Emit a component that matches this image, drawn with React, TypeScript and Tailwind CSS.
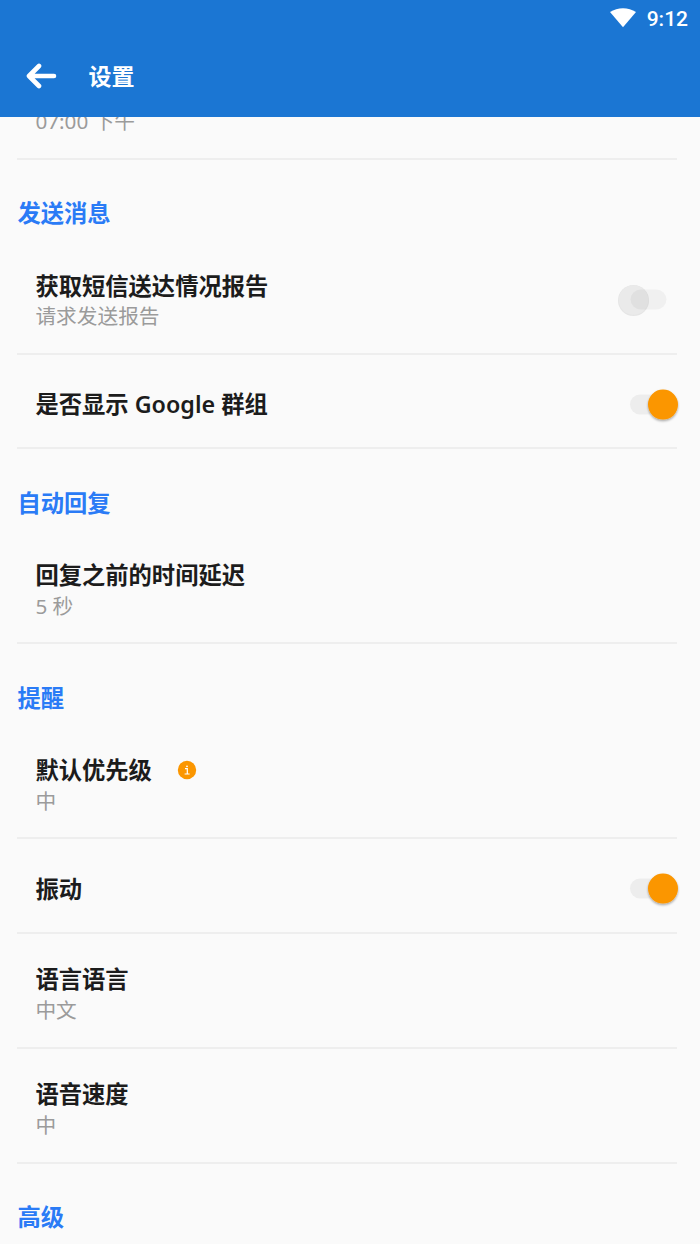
import React from "react";

const FONT = "font-['Noto_Sans','Noto_Sans_CJK_SC',sans-serif]";

function Toggle({ on }: { on: boolean }) {
  return on ? (
    <svg className="-mr-1 h-[40px] w-[56px]" viewBox="0 0 56 40">
      <defs>
        <filter id="knob" x="-30%" y="-30%" width="160%" height="160%">
          <feDropShadow dx="0" dy="1.5" stdDeviation="1" floodColor="#000" floodOpacity="0.35" />
        </filter>
      </defs>
      <rect x="5" y="9.5" width="36" height="20" rx="10" fill="#ededed" />
      <circle cx="38" cy="19.6" r="15" fill="#fb9600" filter="url(#knob)" />
    </svg>
  ) : (
    <svg className="-mr-1 h-[40px] w-[68px]" viewBox="0 0 68 40">
      <circle cx="20.5" cy="20.5" r="15.5" fill="#e5e5e5" />
      <circle cx="20.5" cy="20" r="14.7" fill="#eaeaea" />
      <rect x="17.5" y="9.5" width="36" height="20" rx="10" fill="#000" fillOpacity="0.04" />
    </svg>
  );
}

function Section({ children }: { children: string }) {
  return (
    <h2 className="h-[80px] shrink-0 pt-[38.400px] text-[23.3px] leading-[30px] font-semibold text-[#2a7bf6]">
      {children}
    </h2>
  );
}

type RowProps = { title: string; sub?: string; toggle?: boolean; info?: boolean };

function Row({ title, sub, toggle, info }: RowProps) {
  return (
    <div
      className={
        "mr-[5px] flex shrink-0 items-start justify-between border-b-2 border-[#eeeeee] pl-[18px] " +
        (sub ? "h-[115px] pt-[30.600px]" : "h-[94.4px] pt-[34.200px]")
      }
    >
      <div>
        <div className="flex h-[30px] items-center text-[23.3px] leading-[30px] font-semibold whitespace-nowrap text-[#1c1c1c]">
          {title}
          {info && (
            <svg className="ml-[25.500px] h-[20px] w-[20px]" viewBox="0 0 20 20">
              <circle cx="10" cy="10" r="9.2" fill="#fb9600" />
              <path d="M8 8.7h2.300v5M7.600 14h5" stroke="#fff" strokeWidth="1.2" fill="none" />
              <circle cx="10" cy="6.3" r="0.9" fill="#fff" />
            </svg>
          )}
        </div>
        {sub && (
          <div className="mt-[0.800px] text-[20.7px] leading-[30px] whitespace-nowrap text-[#9b9b9b]">{sub}</div>
        )}
      </div>
      {toggle !== undefined && (
        <div className={sub ? "mt-[9.400px]" : "-mt-[4.200px]"}>
          <Toggle on={toggle} />
        </div>
      )}
    </div>
  );
}

export default function App() {
  return (
    <div className={"flex h-[1244px] w-[700px] flex-col overflow-hidden bg-[#fafafa] " + FONT}>
      <header className="h-[117.4px] shrink-0 bg-[#1b76d3] text-white">
        <div className="flex h-[36px] items-center justify-end pr-[12px]">
          <svg className="mr-[11px] h-[20px] w-[26px]" viewBox="0 0 26 20">
            <path d="M0 4C7.5-1.1 18.500-1.100 26 4L13 19.300Z" fill="#fff" />
          </svg>
          <span className="pt-px font-['Roboto',sans-serif] text-[21px] leading-[36px] font-medium">9:12</span>
        </div>
        <div className="flex h-[80px] items-center pl-[26px]">
          <svg className="h-[26px] w-[31px]" viewBox="0 0 31 26" fill="none" stroke="#fff" strokeLinecap="round" strokeLinejoin="round">
            <path d="M13 3L3 13L13 23M3.500 13H28" strokeWidth="4.6" />
          </svg>
          <h1 className="ml-[31.4px] text-[23px] leading-[30px] font-semibold">设置</h1>
        </div>
      </header>
      <main className="flex min-h-0 flex-1 flex-col overflow-hidden pr-[18px] pl-[17.4px]">
        <div className="mr-[5px] flex h-[42.600px] shrink-0 items-start border-b-2 border-[#eeeeee] pl-[18px]">
          <div className="-mt-[11px] text-[20.7px] leading-[30px] text-[#9b9b9b]">07:00 下午</div>
        </div>
        <Section>发送消息</Section>
        <Row title="获取短信送达情况报告" sub="请求发送报告" toggle={false} />
        <Row title="是否显示 Google 群组" toggle={true} />
        <Section>自动回复</Section>
        <Row title="回复之前的时间延迟" sub="5 秒" />
        <Section>提醒</Section>
        <Row title="默认优先级" sub="中" info />
        <Row title="振动" toggle={true} />
        <Row title="语言语言" sub="中文" />
        <Row title="语音速度" sub="中" />
        <Section>高级</Section>
      </main>
    </div>
  );
}
